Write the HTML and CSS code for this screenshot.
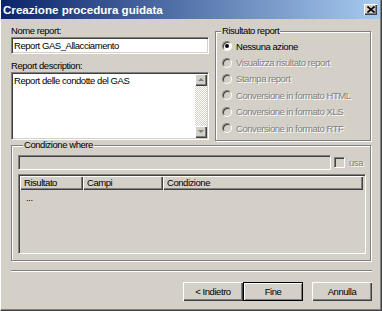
FILE: index.html
```html
<!DOCTYPE html>
<html lang="it">
<head>
    <meta charset="UTF-8">
    <title>Creazione procedura guidata</title>
    <link rel="stylesheet" href="styles.css">
</head>
<body>
    <div class="window">
        <div class="titlebar">
            <span class="title">Creazione procedura guidata</span>
            <span class="close">
                <svg width="8" height="7" viewBox="0 0 8 7">
                    <path d="M0.5 0.5 L7.5 6.5 M7.5 0.5 L0.5 6.5" stroke="#000" stroke-width="1.6" fill="none"/>
                </svg>
            </span>
        </div>

        <div class="content">
            <div class="top">
                <div class="left">
                    <div class="label first">Nome report:</div>
                    <div class="field">Report GAS_Allacciamento</div>
                    <div class="label">Report description:</div>
                    <div class="memo">
                        <div class="memo-text">Report delle condotte del GAS</div>
                        <div class="scrollbar">
                            <span class="sb-btn up"></span>
                            <span class="sb-track"></span>
                            <span class="sb-btn down"></span>
                        </div>
                    </div>
                </div>

                <div class="group result">
                    <div class="group-title">Risultato report</div>
                    <ul class="radios">
                        <li class="radio-row"><span class="radio checked"></span>Nessuna azione</li>
                        <li class="radio-row disabled"><span class="radio"></span>Visualizza risultato report</li>
                        <li class="radio-row disabled"><span class="radio"></span>Stampa report</li>
                        <li class="radio-row disabled"><span class="radio"></span>Conversione in formato HTML</li>
                        <li class="radio-row disabled"><span class="radio"></span>Conversione in formato XLS</li>
                        <li class="radio-row disabled"><span class="radio"></span>Conversione in formato RTF</li>
                    </ul>
                </div>
            </div>

            <div class="group where">
                <div class="group-title">Condizione where</div>
                <div class="where-row">
                    <div class="field disabled-field"></div>
                    <span class="checkbox"></span>
                    <span class="check-label">usa</span>
                </div>
                <div class="listview">
                    <div class="lv-header">
                        <div class="lv-col col-result">Risultato</div>
                        <div class="lv-col col-fields">Campi</div>
                        <div class="lv-col col-cond">Condizione</div>
                    </div>
                    <div class="lv-item">...</div>
                </div>
            </div>

            <div class="separator"></div>

            <div class="buttons">
                <button class="btn">&lt; Indietro</button>
                <button class="btn default">Fine</button>
                <button class="btn cancel">Annulla</button>
            </div>
        </div>
    </div>
</body>
</html>
```

FILE: styles.css
```css
* { margin: 0; padding: 0; box-sizing: border-box; }
body {
    font-family: "Liberation Sans", Arial, sans-serif;
    font-size: 9.5px;
    letter-spacing: -0.45px;
    color: #000;
    background: #d4d0c8;
    width: 382px;
    height: 311px;
    overflow: hidden;
}
.window {
    width: 382px;
    height: 311px;
    display: flex;
    flex-direction: column;
    background: #d4d0c8;
    border-left: 1px solid #fff;
    border-right: 1px solid #404040;
    border-bottom: 1px solid #404040;
    box-shadow: inset -1px -1px #808080;
}
.titlebar {
    height: 19px;
    margin-right: 1px;
    padding: 0 3px 0 2px;
    display: flex;
    align-items: center;
    justify-content: space-between;
    background: linear-gradient(to right, #0a246a, #a6caf0);
    color: #fff;
    font-family: "Liberation Sans Narrow", "Liberation Sans", Arial, sans-serif;
    font-weight: bold;
    font-size: 11.6px;
    letter-spacing: 0;
}
.close {
    width: 13px;
    height: 11px;
    display: flex;
    align-items: center;
    justify-content: center;
    background: #d4d0c8;
    box-shadow: inset 1px 1px #fff, inset -1px -1px #404040, inset -2px -2px #808080;
}
.content {
    padding: 0 10px;
    flex: 1;
}
.top {
    display: grid;
    grid-template-columns: 198px 156px;
    gap: 6px;
}
.label {
    height: 12px;
    line-height: 12px;
    margin-top: 6px;
}

/* sunken edit boxes */
.field, .memo, .listview {
    background: #fff;
    border: 1px solid;
    border-color: #808080 #fff #fff #808080;
    box-shadow: inset 1px 1px #404040, inset -1px -1px #d4d0c8;
}
.field {
    height: 17px;
    line-height: 15px;
    padding-left: 2px;
}
.memo {
    height: 68px;
    display: flex;
    padding: 1px;
}
.memo-text {
    flex: 1;
    padding: 1px 0 0 1px;
    line-height: 12px;
}
.scrollbar {
    width: 12px;
    display: flex;
    flex-direction: column;
}
.sb-btn {
    height: 12px;
    position: relative;
    background: #d4d0c8;
    box-shadow: inset 1px 1px #fff, inset -1px -1px #404040, inset -2px -2px #808080;
}
.sb-btn::after {
    content: "";
    position: absolute;
    left: 3px;
    border-left: 3px solid transparent;
    border-right: 3px solid transparent;
}
.sb-btn.up::after { top: 4px; border-bottom: 3px solid #808080; }
.sb-btn.down::after { top: 4px; border-top: 3px solid #808080; }
.sb-track {
    flex: 1;
    background: repeating-conic-gradient(#fff 0 25%, #d4d0c8 0 50%) 0 0 / 2px 2px;
}

/* etched group boxes */
.group {
    border: 1px solid #808080;
    box-shadow: inset 1px 1px #fff, 1px 1px #fff;
}
.group-title {
    display: table;
    height: 12px;
    line-height: 12px;
    margin: -7px 0 0 5px;
    padding: 0 1px;
    background: #d4d0c8;
}
.result {
    margin-top: 12px;
    height: 110px;
}
.radios {
    list-style: none;
    margin-top: 1px;
    padding-left: 6px;
}
.radio-row {
    height: 16.4px;
    display: flex;
    align-items: center;
    gap: 4px;
}
.radio {
    width: 10px;
    height: 10px;
    border-radius: 50%;
    border: 1px solid;
    border-color: #808080 #fff #fff #808080;
    background: #fff;
    box-shadow: inset 1px 1px #404040;
    display: flex;
    align-items: center;
    justify-content: center;
}
.radio.checked::after {
    content: "";
    width: 4px;
    height: 4px;
    border-radius: 50%;
    background: #000;
}
.disabled, .check-label {
    color: #808080;
    text-shadow: 1px 1px #fff;
}
.disabled .radio { background: #d4d0c8; }

.where {
    margin-top: 4px;
    height: 116px;
    padding: 0 6px;
}
.where-row {
    margin-top: 4px;
    display: flex;
    align-items: center;
}
.disabled-field {
    width: 313px;
    height: 15px;
    background: #d4d0c8;
}
.checkbox {
    width: 11px;
    height: 11px;
    margin-left: 3px;
    border: 1px solid;
    border-color: #808080 #fff #fff #808080;
    box-shadow: inset 1px 1px #404040;
    background: #d4d0c8;
}
.check-label { margin-left: 4px; }
.listview {
    margin-top: 4px;
    width: 348px;
    height: 80px;
    background: #d4d0c8;
    padding: 1px 2px 0 1px;
}
.lv-header {
    display: flex;
    height: 14px;
}
.lv-col {
    line-height: 13px;
    padding-left: 4px;
    background: #d4d0c8;
    box-shadow: inset 1px 1px #fff, inset -1px -1px #404040, inset -2px -2px #808080;
}
.col-result { width: 63px; }
.col-fields { width: 80px; }
.col-cond { flex: 1; }
.lv-item {
    padding: 2px 0 0 6px;
    line-height: 12px;
}

.separator {
    margin-top: 9px;
    margin-right: -1px;
    height: 2px;
    border-top: 1px solid #808080;
    border-bottom: 1px solid #fff;
}
.buttons {
    margin-top: 10px;
    margin-right: -1px;
    display: flex;
    justify-content: flex-end;
}
.btn {
    width: 60px;
    height: 19px;
    font: inherit;
    letter-spacing: inherit;
    color: #000;
    background: #d4d0c8;
    border: 0;
    box-shadow: inset 1px 1px #fff, inset -1px -1px #404040, inset -2px -2px #808080;
}
.btn.default {
    border: 1px solid #000;
    box-shadow: inset 1px 1px #fff, inset -1px -1px #808080;
}
.btn.cancel { margin-left: 9px; }
```
